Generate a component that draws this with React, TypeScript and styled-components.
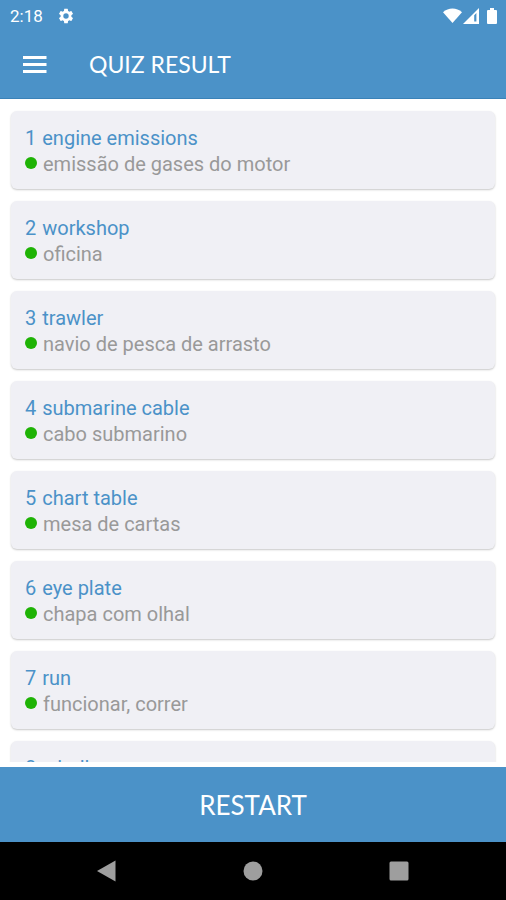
import React from "react";
import styled, { createGlobalStyle } from "styled-components";

const BLUE = "#4b92c8";

const GlobalStyle = createGlobalStyle`
  *, *::before, *::after { box-sizing: border-box; }
  body { margin: 0; background: #fff; font-family: Roboto, "Liberation Sans", sans-serif; }
`;

const Screen = styled.div`
  height: 100vh;
  display: flex;
  flex-direction: column;
  overflow: hidden;
`;

const Header = styled.header`
  flex: none;
  background: ${BLUE};
  color: #fff;
  border-bottom: 1px solid #3a82b8;
`;

const StatusBar = styled.div`
  height: 32px;
  display: flex;
  align-items: center;
  justify-content: space-between;
  padding: 0 8px 0 10px;
`;

const StatusGroup = styled.div<{ $gap: number }>`
  display: flex;
  align-items: center;
  gap: ${(p) => p.$gap}px;
  svg { display: block; }
`;

const Clock = styled.time`
  font-size: 17px;
  line-height: 20px;
`;

const AppBar = styled.div`
  height: 66px;
  display: flex;
  align-items: center;
  gap: 42px;
  padding: 0 23px 2px;
`;

const MenuButton = styled.button`
  border: 0;
  padding: 0;
  background: none;
  color: inherit;
  cursor: pointer;
  svg { display: block; }
`;

const Title = styled.h1`
  margin: 0;
  font: 400 23px/28px Lato, sans-serif;
`;

const List = styled.ol`
  flex: 1;
  min-height: 0;
  overflow: hidden;
  list-style: none;
  margin: 0 0 5px;
  padding: 12px 11px 0;
  display: flex;
  flex-direction: column;
  gap: 12px;
`;

const Card = styled.li`
  flex: none;
  background: #f0f0f5;
  border-radius: 6px;
  box-shadow: 0 1px 2px rgba(0, 0, 0, 0.22);
  padding: 14px 14px 12px;
  font-size: 20px;
  line-height: 26px;
`;

const Term = styled.div`
  display: flex;
  gap: 6px;
  color: ${BLUE};
`;

const Answer = styled.div`
  display: flex;
  align-items: flex-start;
  gap: 6px;
  color: #999;
`;

const Dot = styled.span`
  width: 12px;
  height: 12px;
  margin-top: 6px;
  border-radius: 50%;
  background: #1fb305;
`;

const RestartButton = styled.button`
  flex: none;
  height: 75px;
  border: 0;
  padding: 0;
  background: ${BLUE};
  color: #fff;
  font: 400 26px/30px Lato, sans-serif;
  cursor: pointer;
`;

const NavBar = styled.nav`
  flex: none;
  height: 58px;
  background: #000;
  display: grid;
  grid-template-columns: repeat(3, 146px);
  justify-content: center;
`;

const NavButton = styled.button`
  border: 0;
  padding: 0;
  background: none;
  color: #9e9e9e;
  display: grid;
  place-items: center;
  cursor: pointer;
`;

const items: { term: string; answer?: string }[] = [
  { term: "engine emissions", answer: "emissão de gases do motor" },
  { term: "workshop", answer: "oficina" },
  { term: "trawler", answer: "navio de pesca de arrasto" },
  { term: "submarine cable", answer: "cabo submarino" },
  { term: "chart table", answer: "mesa de cartas" },
  { term: "eye plate", answer: "chapa com olhal" },
  { term: "run", answer: "funcionar, correr" },
  { term: "windlass" },
];

const GearIcon = () => (
  <svg width="18" height="18" viewBox="0 0 24 24" fill="currentColor" aria-hidden="true">
    <path d="M19.14 12.94c.04-.3.06-.61.06-.94 0-.32-.02-.64-.07-.94l2.03-1.58a.49.49 0 0 0 .12-.61l-1.92-3.32a.488.488 0 0 0-.59-.22l-2.39.96c-.5-.38-1.03-.7-1.62-.94l-.36-2.54a.484.484 0 0 0-.48-.41h-3.84c-.24 0-.43.17-.47.41l-.36 2.54c-.59.24-1.13.57-1.62.94l-2.39-.96c-.22-.08-.47 0-.59.22L2.74 8.87c-.12.21-.08.47.12.61l2.03 1.58c-.05.3-.09.63-.09.94s.02.64.07.94l-2.03 1.58a.49.49 0 0 0-.12.61l1.92 3.32c.12.22.37.29.59.22l2.39-.96c.5.38 1.03.7 1.62.94l.36 2.54c.05.24.24.41.48.41h3.84c.24 0 .44-.17.47-.41l.36-2.54c.59-.24 1.13-.56 1.62-.94l2.39.96c.22.08.47 0 .59-.22l1.92-3.32c.12-.22.07-.47-.12-.61l-2.01-1.58zM12 15.6A3.6 3.6 0 1 1 12 8.4a3.6 3.6 0 0 1 0 7.2z" />
  </svg>
);

export default function App() {
  return (
    <Screen>
      <GlobalStyle />
      <Header>
        <StatusBar>
          <StatusGroup $gap={14}>
            <Clock>2:18</Clock>
            <GearIcon />
          </StatusGroup>
          <StatusGroup $gap={1}>
            <svg width="19" height="16" viewBox="0 0 19 16" fill="currentColor" aria-hidden="true">
              <path d="M0 4.2C5.4-.7 13.6-.7 19 4.2L9.5 15z" />
            </svg>
            <svg width="17" height="16" viewBox="0 0 17 16" aria-hidden="true">
              <path fill="currentColor" fillRule="evenodd" d="M16 0v16H0zM13.4 5l-2.2 2.2V13.6h2.2z" />
            </svg>
            <svg width="17" height="16" viewBox="0 0 17 16" fill="currentColor" aria-hidden="true">
              <path d="M9 0h4v2h2q1 0 1 1v12q0 1-1 1H7q-1 0-1-1V3q0-1 1-1h2z" />
            </svg>
          </StatusGroup>
        </StatusBar>
        <AppBar>
          <MenuButton type="button" aria-label="Open menu">
            <svg width="24" height="17" viewBox="0 0 24 17" fill="currentColor" aria-hidden="true">
              <path d="M0 0h23.5v3H0zM0 7h23.5v3H0zM0 14h23.5v3H0z" />
            </svg>
          </MenuButton>
          <Title>QUIZ RESULT</Title>
        </AppBar>
      </Header>
      <List>
        {items.map(({ term, answer }, i) => (
          <Card key={term}>
            <Term>
              <span>{i + 1}</span>
              <span>{term}</span>
            </Term>
            {answer && (
              <Answer>
                <Dot />
                <span>{answer}</span>
              </Answer>
            )}
          </Card>
        ))}
      </List>
      <RestartButton type="button">RESTART</RestartButton>
      <NavBar aria-label="System navigation">
        <NavButton type="button" aria-label="Back">
          <svg width="20" height="22" viewBox="0 0 20 22" fill="currentColor" aria-hidden="true">
            <path d="M18.5 .5v21L0 11z" />
          </svg>
        </NavButton>
        <NavButton type="button" aria-label="Home">
          <svg width="20" height="20" viewBox="0 0 20 20" fill="currentColor" aria-hidden="true">
            <circle cx="10" cy="10" r="9.5" />
          </svg>
        </NavButton>
        <NavButton type="button" aria-label="Recent apps">
          <svg width="20" height="20" viewBox="0 0 20 20" fill="currentColor" aria-hidden="true">
            <rect x=".5" y=".5" width="19" height="19" rx="1.5" />
          </svg>
        </NavButton>
      </NavBar>
    </Screen>
  );
}
